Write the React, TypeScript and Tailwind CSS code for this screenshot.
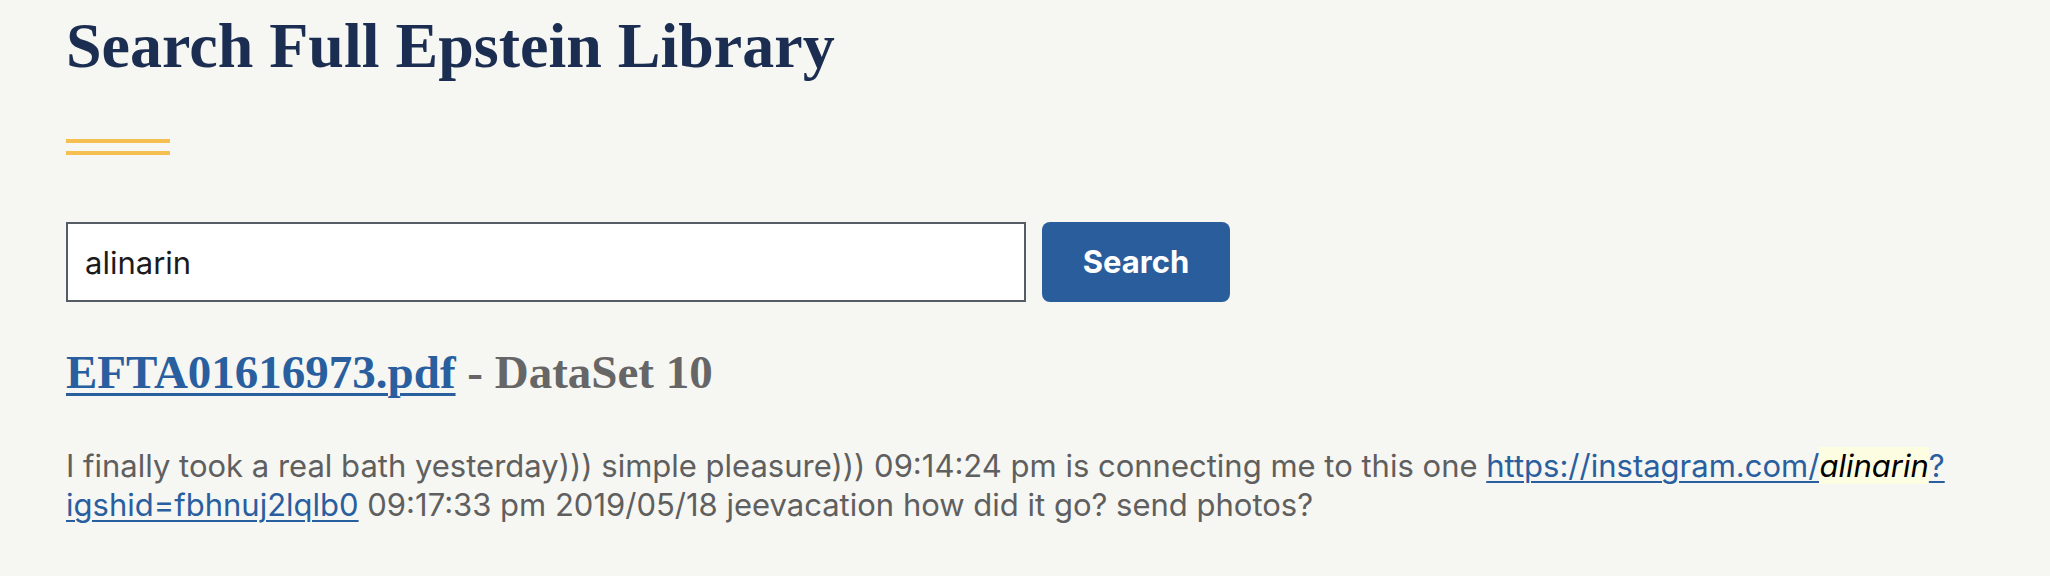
export default function App() {
  const serif = { fontFamily: '"Liberation Serif", "Times New Roman", serif' };
  return (
    <div
      className="min-h-screen bg-[#f6f6f2] px-[66px] pt-[8px]"
      style={{ fontFamily: 'Inter, "Liberation Sans", Arial, sans-serif' }}
    >
      {/* Page title */}
      <h1 style={serif} className="text-[64px] leading-[76px] font-bold text-[#1b2d50]">
        Search Full Epstein Library
      </h1>

      {/* Double accent rule */}
      <div className="mt-[55px] flex flex-col gap-[8px]">
        <div className="h-[4px] w-[104px] bg-[#f6bf51]" />
        <div className="h-[4px] w-[104px] bg-[#f6bf51]" />
      </div>

      {/* Search form */}
      <form className="mt-[67px] flex gap-[16px]" onSubmit={(e) => e.preventDefault()}>
        <input
          type="text"
          defaultValue="alinarin"
          className="h-[80px] w-[960px] border-2 border-[#565c65] bg-white px-[17px] text-[31px] text-[#1b1b1b] outline-none"
        />
        <button
          type="submit"
          className="h-[80px] w-[188px] rounded-[8px] bg-[#2a5d9c] text-[31px] font-bold text-white"
        >
          Search
        </button>
      </form>

      {/* Result */}
      <h3 style={serif} className="mt-[42px] text-[47px] leading-[56px] font-bold text-[#666666]">
        <a
          href="#"
          className="text-[#2a5f9f] underline decoration-[3px] underline-offset-[5px]"
        >
          EFTA01616973.pdf
        </a>{" "}
        - DataSet 10
      </h3>

      <p className="mt-[46px] text-[31px] leading-[39px] text-[#5f5f5f]">
        I finally took a real bath yesterday))) simple pleasure))) 09:14:24 pm is connecting me to this one{" "}
        <a href="#" className="text-[#2a5f9f]">
          <span className="underline decoration-2 underline-offset-[4px]">https://instagram.com/</span>
          <mark className="bg-[#fdfde2] italic text-black">alinarin</mark>
          <span className="underline decoration-2 underline-offset-[4px]">?</span>
          <wbr />
          <span className="underline decoration-2 underline-offset-[4px]">igshid=fbhnuj2lqlb0</span>
        </a>{" "}
        09:17:33 pm 2019/05/18 jeevacation how did it go? send photos?
      </p>
    </div>
  );
}
